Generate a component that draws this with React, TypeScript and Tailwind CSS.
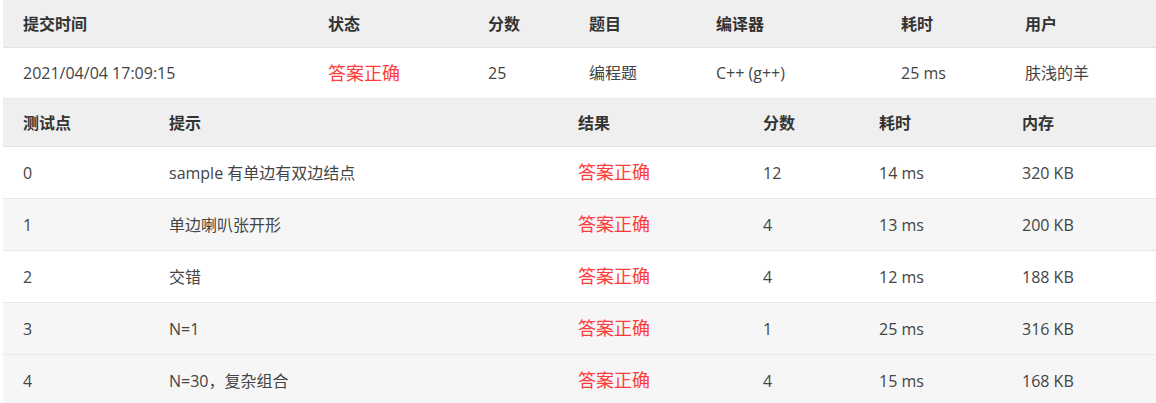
import React from "react";

const font = { fontFamily: '"Open Sans", "Noto Sans CJK SC", sans-serif' };

const top = {
  head: ["提交时间", "状态", "分数", "题目", "编译器", "耗时", "用户"],
  row: ["2021/04/04 17:09:15", "答案正确", "25", "编程题", "C++ (g++)", "25 ms", "肤浅的羊"],
};

const cases = [
  ["0", "sample 有单边有双边结点", "答案正确", "12", "14 ms", "320 KB"],
  ["1", "单边喇叭张开形", "答案正确", "4", "13 ms", "200 KB"],
  ["2", "交错", "答案正确", "4", "12 ms", "188 KB"],
  ["3", "N=1", "答案正确", "1", "25 ms", "316 KB"],
  ["4", "N=30，复杂组合", "答案正确", "4", "15 ms", "168 KB"],
];

function Cell({ text, red }: { text: string; red?: boolean }) {
  return (
    <div className="flex items-center px-5">
      <span className={red ? "text-[18px] text-[#ff3b3b]" : "text-[16px] text-[#444]"}>{text}</span>
    </div>
  );
}

function HeadCell({ text }: { text: string }) {
  return (
    <div className="flex items-center px-5">
      <span className="text-[16px] font-bold text-[#333]">{text}</span>
    </div>
  );
}

export default function App() {
  return (
    <div className="w-[1156px] h-[403px] overflow-hidden bg-white pl-[3px]" style={font}>
      <div className="grid grid-cols-[305px_160px_101px_127px_185px_124px_151px] h-[48px] bg-[#efefef] border-b border-[#e3e3e3]">
        {top.head.map((h) => (
          <HeadCell key={h} text={h} />
        ))}
      </div>
      <div className="grid grid-cols-[305px_160px_101px_127px_185px_124px_151px] h-[51px] bg-white border-b border-[#e8e8e8]">
        {top.row.map((c, i) => (
          <Cell key={i} text={c} red={i === 1} />
        ))}
      </div>
      <div className="grid grid-cols-[146px_409px_185px_116px_143px_154px] h-[48px] bg-[#efefef] border-b border-[#e3e3e3]">
        {["测试点", "提示", "结果", "分数", "耗时", "内存"].map((h) => (
          <HeadCell key={h} text={h} />
        ))}
      </div>
      {cases.map((r, ri) => (
        <div
          key={ri}
          className={
            "grid grid-cols-[146px_409px_185px_116px_143px_154px] h-[52px] border-b border-[#e8e8e8] " +
            (ri === 0 || ri === 2 ? "bg-white" : "bg-[#f6f6f6]")
          }
        >
          {r.map((c, i) => (
            <Cell key={i} text={c} red={i === 2} />
          ))}
        </div>
      ))}
    </div>
  );
}
